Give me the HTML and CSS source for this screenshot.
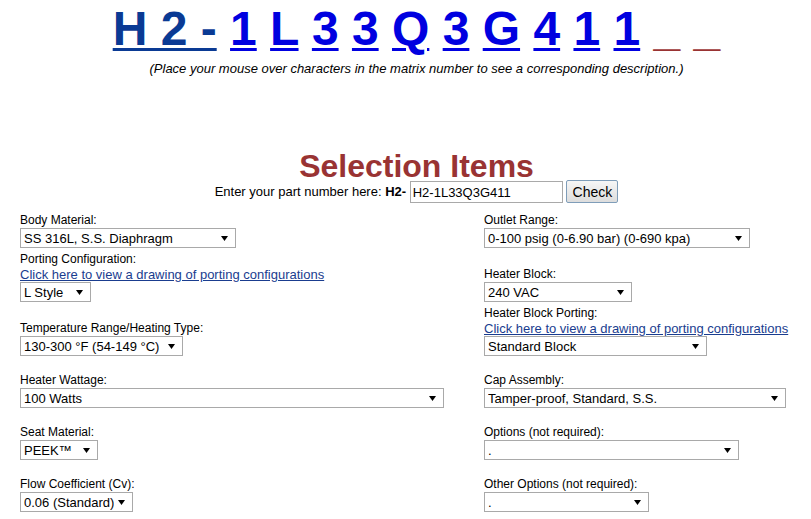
FILE: index.html
```html
<!DOCTYPE html>
<html lang="en">
<head>
    <meta charset="UTF-8">
    <meta name="viewport" content="width=device-width, initial-scale=1.0">
    <title>H2 Regulator - Selection Items</title>
    <link rel="stylesheet" href="styles.css">
</head>
<body>
    <div class="matrix">
        <a class="fixed" href="#">H 2 -</a>
        <a href="#">1</a>
        <a href="#">L</a>
        <a href="#">3</a>
        <a href="#">3</a>
        <a href="#">Q</a>
        <a href="#">3</a>
        <a href="#">G</a>
        <a href="#">4</a>
        <a href="#">1</a>
        <a href="#">1</a>
        <span class="blank">_</span>
        <span class="blank">_</span>
    </div>
    <p class="hint">(Place your mouse over characters in the matrix number to see a corresponding description.)</p>

    <h2 class="title">Selection Items</h2>
    <div class="partnum">
        Enter your part number here: <b>H2-</b>
        <input type="text" id="part" value="H2-1L33Q3G411">
        <button>Check</button>
    </div>

    <div class="grid">
        <div class="row">
            <div class="field">
                <label for="body">Body Material:</label>
                <span class="sel s-body"><select id="body"><option>SS 316L, S.S. Diaphragm</option></select></span>
            </div>
            <div class="field">
                <label for="outlet">Outlet Range:</label>
                <span class="sel s-outlet"><select id="outlet"><option>0-100 psig (0-6.90 bar) (0-690 kpa)</option></select></span>
            </div>
        </div>

        <div class="row">
            <div class="field">
                <label for="porting">Porting Configuration:</label>
                <a class="drawing" href="#">Click here to view a drawing of porting configurations</a>
                <span class="sel s-lstyle"><select id="porting"><option>L Style</option></select></span>
            </div>
            <div class="field">
                <label for="hblock">Heater Block:</label>
                <span class="sel s-hblock"><select id="hblock"><option>240 VAC</option></select></span>
            </div>
        </div>

        <div class="row">
            <div class="field">
                <label for="temp">Temperature Range/Heating Type:</label>
                <span class="sel s-temp"><select id="temp"><option>130-300 °F (54-149 °C)</option></select></span>
            </div>
            <div class="field">
                <label for="hbport">Heater Block Porting:</label>
                <a class="drawing" href="#">Click here to view a drawing of porting configurations</a>
                <span class="sel s-hbport"><select id="hbport"><option>Standard Block</option></select></span>
            </div>
        </div>

        <div class="row spaced">
            <div class="field">
                <label for="watt">Heater Wattage:</label>
                <span class="sel s-watt"><select id="watt"><option>100 Watts</option></select></span>
            </div>
            <div class="field">
                <label for="cap">Cap Assembly:</label>
                <span class="sel s-cap"><select id="cap"><option>Tamper-proof, Standard, S.S.</option></select></span>
            </div>
        </div>

        <div class="row spaced">
            <div class="field">
                <label for="seat">Seat Material:</label>
                <span class="sel s-seat"><select id="seat"><option>PEEK™</option></select></span>
            </div>
            <div class="field">
                <label for="opts">Options (not required):</label>
                <span class="sel s-opts"><select id="opts"><option>.</option></select></span>
            </div>
        </div>

        <div class="row spaced">
            <div class="field">
                <label for="flow">Flow Coefficient (Cv):</label>
                <span class="sel s-flow"><select id="flow"><option>0.06 (Standard)</option></select></span>
            </div>
            <div class="field">
                <label for="other">Other Options (not required):</label>
                <span class="sel s-other"><select id="other"><option>.</option></select></span>
            </div>
        </div>
    </div>
</body>
</html>
```

FILE: styles.css
```css
body {
    font-family: Arial, "Liberation Sans", sans-serif;
    background-color: #fff;
    color: #000;
    margin: 0;
}

/* matrix number at the top */
.matrix {
    padding: 1px 0 0 22px;
    text-align: center;
    font-size: 48px;
    font-weight: bold;
    line-height: 55px;
    white-space: nowrap;
}

.matrix a {
    color: #0000e0;
    text-decoration-thickness: 3px;
    text-underline-offset: 3px;
}

.matrix a.fixed {
    color: #0a3a94;
}

.matrix .blank {
    color: #993333;
}

.hint {
    margin: 5px 0 0;
    padding-left: 22px;
    text-align: center;
    font-size: 13px;
    font-style: italic;
    line-height: 15px;
}

.title {
    margin: 75px 0 0;
    padding-left: 22px;
    text-align: center;
    color: #993333;
    font-size: 32px;
    line-height: 30px;
}

.partnum {
    margin-top: -1px;
    padding-left: 22px;
    text-align: center;
    font-size: 13px;
    line-height: 23px;
}

.partnum input {
    box-sizing: border-box;
    width: 153px;
    height: 22px;
    padding: 0 2px;
    border: 1px solid #a9a9a9;
    font-family: inherit;
    font-size: 13px;
    vertical-align: bottom;
}

.partnum button {
    box-sizing: border-box;
    width: 52px;
    height: 23px;
    padding: 0;
    border: 1px solid #7f9db9;
    border-radius: 2px;
    background: linear-gradient(#f6f6f6, #dddddd);
    font-family: inherit;
    font-size: 14px;
    color: #000;
    vertical-align: bottom;
}

/* two column form */
.grid {
    margin-top: 9px;
    padding-left: 20px;
}

.row {
    display: grid;
    grid-template-columns: 464px auto;
    align-items: end;
}

.row + .row {
    margin-top: 3px;
}

.row.spaced {
    margin-top: 16px;
}

.field {
    display: flex;
    flex-direction: column;
    align-items: flex-start;
}

.field label {
    font-size: 12px;
    line-height: 16px;
}

.drawing {
    color: #1a3d8f;
    font-size: 13px;
    line-height: 15px;
}

.sel {
    position: relative;
    display: block;
    height: 20px;
}

.sel select {
    box-sizing: border-box;
    width: 100%;
    height: 20px;
    padding: 0 18px 0 3px;
    border: 1px solid #a9a9a9;
    border-radius: 0;
    background-color: #fff;
    color: #000;
    font-family: inherit;
    font-size: 13px;
    appearance: none;
    -webkit-appearance: none;
}

.sel::after {
    content: "";
    position: absolute;
    right: 8px;
    top: 8px;
    width: 7px;
    height: 5px;
    background-color: #000;
    clip-path: polygon(0 0, 100% 0, 50% 100%);
    pointer-events: none;
}

.s-body { width: 216px; }
.s-lstyle { width: 71px; }
.s-temp { width: 163px; }
.s-watt { width: 424px; }
.s-seat { width: 78px; }
.s-flow { width: 113px; }
.s-outlet { width: 266px; }
.s-hblock { width: 148px; }
.s-hbport { width: 223px; }
.s-cap { width: 302px; }
.s-opts { width: 255px; }
.s-other { width: 165px; }
```
